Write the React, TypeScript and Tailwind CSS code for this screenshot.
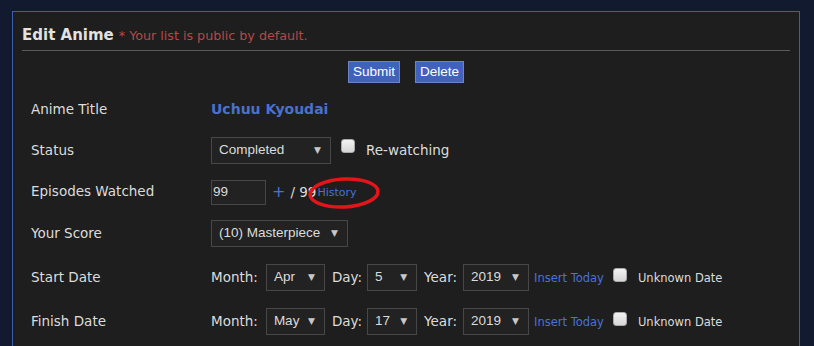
import React from "react";

const font = { fontFamily: '"DejaVu Sans", Verdana, sans-serif' };
const narrow = { fontFamily: '"Liberation Sans", Arial, sans-serif' };

function Arrow() {
  return <span className="text-[9px] text-[#c8c8c8] leading-none" style={font}>▼</span>;
}

function Select({ value, w }: { value: string; w: string }) {
  return (
    <div
      className={`flex shrink-0 items-center justify-between whitespace-nowrap h-[27px] border border-[#474747] bg-[#222222] pl-[7px] pr-[9px] text-[13.5px] text-[#dcdcdc] ${w}`}
      style={narrow}
    >
      <span>{value}</span>
      <Arrow />
    </div>
  );
}

function Check() {
  return (
    <div className="w-[14px] h-[14px] rounded-[3px] border border-[#a9a9a9] bg-gradient-to-b from-[#f2f2f2] to-[#d6d6d6]" />
  );
}

function Row({ label, children, h }: { label: string; children: React.ReactNode; h: string }) {
  return (
    <div className={`flex items-center ${h}`}>
      <div className="w-[198px] shrink-0 pl-[18px] text-[13.5px] text-[#dcdcdc]">{label}</div>
      <div className="flex items-center whitespace-nowrap">{children}</div>
    </div>
  );
}

function DateRow({ label, month, day }: { label: string; month: string; day: string }) {
  return (
    <Row label={label} h="h-[44px]">
      <span className="text-[13.5px] text-[#dcdcdc] mr-[8px]">Month:</span>
      <Select value={month} w="w-[59px]" />
      <span className="text-[13.5px] text-[#dcdcdc] ml-[7px] mr-[5px]">Day:</span>
      <Select value={day} w="w-[50px]" />
      <span className="text-[13.5px] text-[#dcdcdc] ml-[7px] mr-[6px]">Year:</span>
      <Select value="2019" w="w-[66px]" />
      <span className="text-[11.5px] text-[#4a72d4] ml-[5px] mt-[3px]">Insert Today</span>
      <div className="ml-[9px] -mt-[5px]">
        <Check />
      </div>
      <span className="text-[11.5px] text-[#dcdcdc] ml-[11px] mt-[3px]">Unknown Date</span>
    </Row>
  );
}

function Btn({ children }: { children: React.ReactNode }) {
  return (
    <div
      className="h-[22px] px-[4px] flex items-center bg-[#4062b8] border border-[#6a86c8] text-[13.5px] text-white"
      style={narrow}
    >
      {children}
    </div>
  );
}

export default function App() {
  return (
    <div className="w-[814px] h-[346px] overflow-hidden bg-[#111a2e] pt-[11px] pl-[12px]" style={font}>
      <div className="w-[788px] h-[400px] border border-[#3f5ca8] bg-[#1e1e1e]">
        <div className="mx-[9px] pt-[13px] pb-[4px] border-b border-[#5a5a5a] flex items-baseline leading-[20px]">
          <span className="text-[15px] font-bold text-[#e2e2e2]">Edit Anime</span>
          <span className="text-[12.7px] text-[#b64848] ml-[5px]">* Your list is public by default.</span>
        </div>
        <div className="flex justify-center gap-[15px] mt-[10px]">
          <Btn>Submit</Btn>
          <Btn>Delete</Btn>
        </div>
        <div className="mt-[6px]">
          <Row label="Anime Title" h="h-[40px]">
            <span className="text-[14px] font-bold text-[#4a70d0]">Uchuu Kyoudai</span>
          </Row>
          <Row label="Status" h="h-[42px]">
            <Select value="Completed" w="w-[120px]" />
            <div className="ml-[10px] -mt-[8px]">
              <Check />
            </div>
            <span className="ml-[11px] text-[13.5px] text-[#dcdcdc]">Re-watching</span>
          </Row>
          <Row label="Episodes Watched" h="h-[40px]">
            <div className="relative flex items-center mt-[2px]">
              <div className="w-[55px] h-[25px] border border-[#474747] bg-[#222222] text-[13.5px] text-[#dcdcdc] flex items-center pl-[1px]" style={narrow}>
                99
              </div>
              <span className="ml-[6px] text-[16px] text-[#4a72d4]">+</span>
              <span className="ml-[5px] text-[13.5px] text-[#dcdcdc]">/ 99</span>
              <span className="ml-[1px] mt-[3px] text-[11px] text-[#4a72d4]">History</span>
              <svg className="absolute left-[95px] top-[-5px]" width="76" height="36" viewBox="0 0 76 36">
                <ellipse cx="38" cy="18" rx="34" ry="14" fill="none" stroke="#e3151b" strokeWidth="3.5" transform="rotate(-3 38 18)" />
              </svg>
            </div>
          </Row>
          <Row label="Your Score" h="h-[44px]">
            <Select value="(10) Masterpiece" w="w-[137px]" />
          </Row>
          <DateRow label="Start Date" month="Apr" day="5" />
          <DateRow label="Finish Date" month="May" day="17" />
        </div>
      </div>
    </div>
  );
}
